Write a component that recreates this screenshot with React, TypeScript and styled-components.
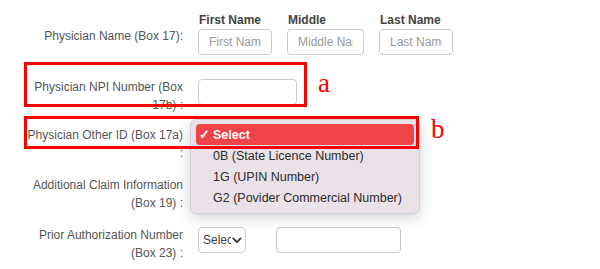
import styled, { createGlobalStyle } from "styled-components";

const GlobalStyle = createGlobalStyle`
  html, body {
    margin: 0;
    background: #fff;
  }
  body {
    font-family: "Liberation Sans", Arial, sans-serif;
  }
`;

const nameFields = [
  { title: "First Name", placeholder: "First Name", width: 74 },
  { title: "Middle", placeholder: "Middle Name", width: 77 },
  { title: "Last Name", placeholder: "Last Name", width: 74 },
];

const otherIdOptions = [
  "0B (State Licence Number)",
  "1G (UPIN Number)",
  "G2 (Povider Commercial Number)",
];

export default function App() {
  return (
    <>
      <GlobalStyle />
      <Page>
        <Row>
          <Label $offset={15}>Physician Name (Box 17):</Label>
          <NameGroup>
            {nameFields.map((f) => (
              <NameColumn key={f.title}>
                <ColumnTitle>{f.title}</ColumnTitle>
                <TextInput placeholder={f.placeholder} $width={f.width} />
              </NameColumn>
            ))}
          </NameGroup>
        </Row>
        <Row $space={15}>
          <Label>Physician NPI Number (Box 17b) :</Label>
          <Field>
            <TextInput $width={99} />
          </Field>
        </Row>
        <Row $space={12}>
          <Label>Physician Other ID (Box 17a) :</Label>
          <Field />
        </Row>
        <Row $space={14}>
          <Label>Additional Claim Information (Box 19) :</Label>
          <Field />
        </Row>
        <Row $space={14}>
          <Label>Prior Authorization Number (Box 23) :</Label>
          <Field $gap={30}>
            <SelectBox>
              <SelectText>Select</SelectText>
              <Chevron viewBox="0 0 10 7">
                <path d="M1.2 1.3 L5 5.2 L8.8 1.3" />
              </Chevron>
            </SelectBox>
            <TextInput $width={125} />
          </Field>
        </Row>

        <Menu>
          <MenuItem $selected>
            <Check>✓</Check>Select
          </MenuItem>
          {otherIdOptions.map((o) => (
            <MenuItem key={o}>{o}</MenuItem>
          ))}
        </Menu>

        <Highlight $left={24} $top={62} $width={283} $height={45} />
        <Highlight $left={24} $top={116} $width={395} $height={33} />
        <Marker $left={318} $top={68}>a</Marker>
        <Marker $left={431} $top={114}>b</Marker>
      </Page>
    </>
  );
}

const Page = styled.div`
  position: relative;
  width: 600px;
  height: 269px;
  box-sizing: border-box;
  padding: 12px 0 0 25px;
  display: flex;
  flex-direction: column;
  overflow: hidden;
`;

const Row = styled.div<{ $space?: number }>`
  display: flex;
  align-items: flex-start;
  gap: 15px;
  margin-top: ${(p) => p.$space ?? 0}px;
`;

const Label = styled.div<{ $offset?: number }>`
  width: 158px;
  flex: none;
  padding-top: ${(p) => p.$offset ?? 0}px;
  text-align: right;
  font-size: 12px;
  line-height: 18px;
  color: #555;
  min-height: 36px;
  box-sizing: content-box;
`;

const Field = styled.div<{ $gap?: number }>`
  display: flex;
  align-items: flex-start;
  gap: ${(p) => p.$gap ?? 0}px;
  padding-top: 1px;
`;

const NameGroup = styled.div`
  display: flex;
  gap: 15px;
`;

const NameColumn = styled.div`
  display: flex;
  flex-direction: column;
  gap: 1px;
`;

const ColumnTitle = styled.div`
  font-size: 12px;
  font-weight: bold;
  line-height: 16px;
  color: #444;
  padding-left: 1px;
`;

const TextInput = styled.input<{ $width: number }>`
  width: ${(p) => p.$width}px;
  height: 26px;
  box-sizing: border-box;
  border: 1px solid #ccc;
  border-radius: 4px;
  padding: 0 10px;
  font-family: "Liberation Sans", Arial, sans-serif;
  font-size: 12px;
  color: #555;
  background: #fff;
  outline: none;
  &::placeholder {
    color: #999;
  }
`;

const SelectBox = styled.div`
  width: 48px;
  height: 26px;
  box-sizing: border-box;
  border: 1px solid #ccc;
  border-radius: 4px;
  display: flex;
  align-items: center;
  padding: 0 3px 0 4px;
  gap: 1px;
  background: #fff;
`;

const SelectText = styled.span`
  width: 29px;
  overflow: hidden;
  white-space: nowrap;
  font-size: 12px;
  color: #444;
`;

const Chevron = styled.svg`
  width: 10px;
  height: 7px;
  fill: none;
  stroke: #333;
  stroke-width: 1.8;
  stroke-linecap: round;
  stroke-linejoin: round;
`;

const Menu = styled.div`
  position: absolute;
  left: 190px;
  top: 119px;
  width: 230px;
  box-sizing: border-box;
  padding: 4px 5px 5px;
  background: #eae2e8;
  border: 1px solid #d6d0d4;
  border-radius: 6px;
  box-shadow: 0 4px 14px rgba(0, 0, 0, 0.18);
  display: flex;
  flex-direction: column;
`;

const MenuItem = styled.div<{ $selected?: boolean }>`
  height: 21px;
  display: flex;
  align-items: center;
  padding-left: ${(p) => (p.$selected ? 3 : 17)}px;
  border-radius: 4px;
  font-size: 12.5px;
  white-space: nowrap;
  color: ${(p) => (p.$selected ? "#fff" : "#2b2b2b")};
  font-weight: ${(p) => (p.$selected ? "bold" : "normal")};
  background: ${(p) => (p.$selected ? "#ef4347" : "transparent")};
`;

const Check = styled.span`
  width: 14px;
  font-weight: bold;
`;

const Highlight = styled.div<{
  $left: number;
  $top: number;
  $width: number;
  $height: number;
}>`
  position: absolute;
  left: ${(p) => p.$left}px;
  top: ${(p) => p.$top}px;
  width: ${(p) => p.$width}px;
  height: ${(p) => p.$height}px;
  box-sizing: border-box;
  border: 3px solid #f00;
  pointer-events: none;
`;

const Marker = styled.div<{ $left: number; $top: number }>`
  position: absolute;
  left: ${(p) => p.$left}px;
  top: ${(p) => p.$top}px;
  font-family: "Liberation Serif", "Times New Roman", serif;
  font-size: 27px;
  line-height: 30px;
  color: #f00;
`;
